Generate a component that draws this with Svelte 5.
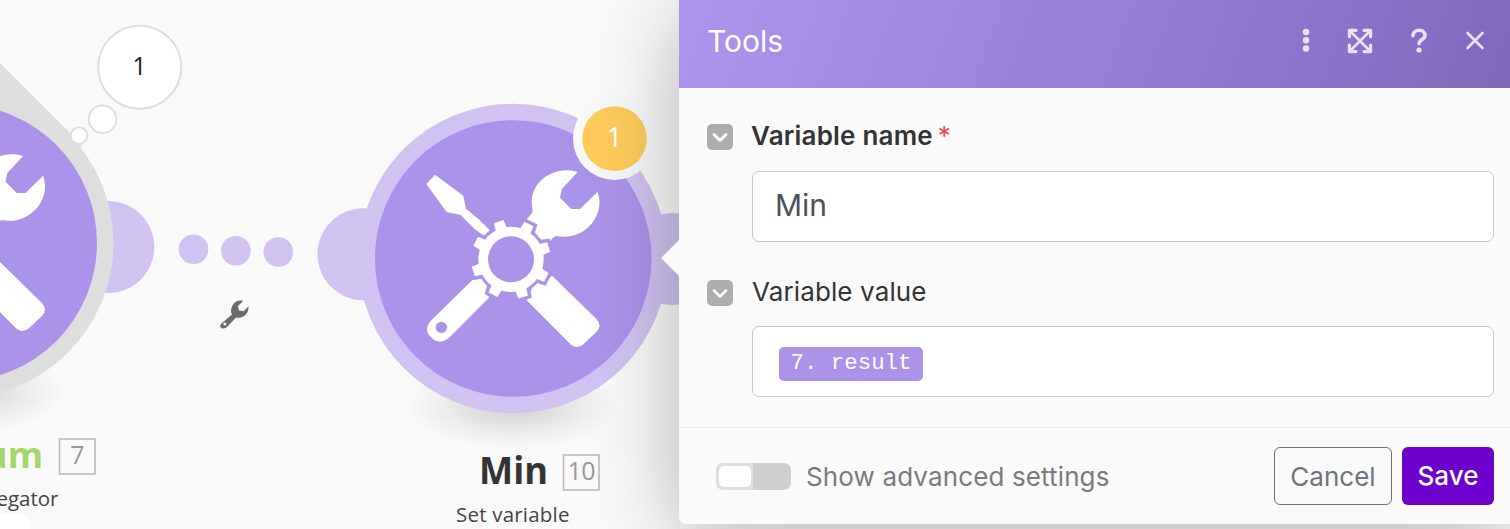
<script>
  const teeth = [27, 72, 117, 162, 207, 252, 297, 342];
  const links = [
    { x: 193.5, y: 249.3 },
    { x: 235.8, y: 250.8 },
    { x: 278.3, y: 252 }
  ];
</script>

{#snippet toolsIcon()}
  <path fill="#fff" d="M75 59L160 122L168 161L206 193L240 226L222 242L209 233Q190 220 181 209L152 180L110 171L49 87Z" />
  <path fill="#fff" d="M503 51C434 28 356 82 366 152L368 172L350 193L372 250L420 259L428 249L438 243C520 260 589 184 563 110L510 162H484L450 128L455 103Z" />
  <path fill="#fff" d="M427 363L560 493Q577 512 560 530L520 568Q502 583 484 570L350 436L370 390Z" />
  <path fill="#fff" fill-rule="evenodd" d="M188 374L230 370L237 428L122 544C100 567 74 562 62 545C46 532 49 509 65 495ZM94 500a17 17 0 1 0 .1 0Z" />
  <g class="gear-gap">
    <circle cx="303" cy="313" r="97" />
    {#each teeth as a}
      <path transform={`translate(303 313) rotate(${a})`} d="M86 -20L119 -15V15L86 20Z" />
    {/each}
  </g>
  <g fill="#fff">
    <circle cx="303" cy="313" r="98" />
    {#each teeth as a}
      <path transform={`translate(303 313) rotate(${a})`} d="M86 -18L119 -15V15L86 18Z" />
    {/each}
  </g>
  <circle cx="303" cy="313" r="69" fill="#ab93e9" />
{/snippet}

{#snippet toggle()}
  <span class="check">
    <svg width="26" height="26" viewBox="0 0 26 26"><path d="M7 10.5l6 6 6-6" fill="none" stroke="#fff" stroke-width="2.8" stroke-linecap="round" stroke-linejoin="round" /></svg>
  </span>
{/snippet}

<main>
  <svg class="canvas" width="1510" height="529" viewBox="0 0 1510 529">
    <defs>
      <radialGradient id="soft"><stop offset="0" stop-color="#000" stop-opacity=".16" /><stop offset=".6" stop-color="#000" stop-opacity=".06" /><stop offset="1" stop-color="#000" stop-opacity="0" /></radialGradient>
    </defs>
    <ellipse cx="-41" cy="392" rx="108" ry="42" fill="url(#soft)" />
    <ellipse cx="513" cy="407" rx="108" ry="42" fill="url(#soft)" />

    <circle cx="108.3" cy="247" r="46" fill="#d0c3f1" />
    <path d="M-60 3L68.5 131.5L82 146L20 220H-60Z" fill="#dedede" />
    <circle cx="-41.5" cy="243" r="155" fill="#dedede" />
    <circle cx="-41.5" cy="243" r="138.5" fill="#ab93e9" />
    <g transform="translate(-144.5 139) scale(.33333)">{@render toolsIcon()}</g>

    <g fill="#fff" stroke="#dedede" stroke-width="2">
      <circle cx="139.7" cy="67.2" r="41.5" />
      <circle cx="102.6" cy="119.3" r="13.8" />
      <circle cx="79" cy="135.6" r="8.3" />
    </g>
    <text class="seg" x="139.5" y="75" font-size="25" text-anchor="middle" fill="#222">1</text>

    {#each links as dot}
      <circle cx={dot.x} cy={dot.y} r="14.8" fill="#d0c3f1" />
    {/each}
    <path fill="#6b6b6b" fill-rule="evenodd" d="M243 301C237 299 231 304 231 312L232 314.5L221.5 323.5C219.5 325.5 220 327.5 222 328.3C224 329 226 328 227.5 326.5L236 317.5C244 319 249 313 248.5 306.5L243.5 311.3L239 310.5L238 306ZM224.8 322.4a1.5 1.5 0 1 0 .1 0Z" />

    <g fill="#d0c3f1">
      <circle cx="363.5" cy="254.3" r="46" />
      <circle cx="672" cy="259" r="46" />
      <circle cx="513" cy="258.5" r="154.7" />
    </g>
    <circle cx="513.2" cy="258.5" r="138.3" fill="#ab93e9" />
    <g transform="translate(410 155) scale(.33333)">{@render toolsIcon()}</g>
    <circle cx="614.5" cy="138.5" r="41.5" fill="#f8f8f8" />
    <circle cx="614.5" cy="138.7" r="32.3" fill="#fdcc5b" />
    <text class="seg" x="614.5" y="147" font-size="28" text-anchor="middle" fill="#fff">1</text>

    <text class="seg bold" x="43" y="468" font-size="36" text-anchor="end" fill="#a4d768">Sum</text>
    <rect x="59.5" y="439" width="35.5" height="35" fill="#f9f9f9" stroke="#bbb" stroke-width="1.6" />
    <text class="seg" x="77.5" y="464" font-size="25" text-anchor="middle" fill="#999">7</text>
    <text class="seg" x="58.5" y="506" font-size="20.5" text-anchor="end" fill="#444">Text aggregator</text>
    <rect x="-40" y="514" width="70" height="40" rx="14" fill="#fff" />

    <text class="seg bold" x="479" y="484" font-size="37" textLength="69" lengthAdjust="spacingAndGlyphs" fill="#333">Min</text>
    <rect x="563.5" y="455" width="35.5" height="35" fill="#f9f9f9" stroke="#bbb" stroke-width="1.6" />
    <text class="seg" x="581.5" y="480" font-size="25" textLength="28" text-anchor="middle" fill="#999">10</text>
    <text class="seg" x="456" y="521.5" font-size="20.5" textLength="113.5" fill="#444">Set variable</text>
  </svg>

  <section class="panel">
    <svg class="arrow" width="19" height="36" viewBox="0 0 19 36"><path d="M19 0L1 18L19 36Z" fill="#fafafa" /></svg>
    <header>
      <h1>Tools</h1>
      <nav>
        <svg width="10" height="26" viewBox="0 0 10 26"><g fill="#e9dff8"><circle cx="5" cy="4" r="3.3" /><circle cx="5" cy="12.2" r="3.3" /><circle cx="5" cy="20.5" r="3.3" /></g></svg>
        <svg width="26" height="26" viewBox="0 0 26 26"><path d="M3 3L23 23M23 3L3 23" stroke="#e9dff8" stroke-width="2.7" /><path d="M2.4 8.8V2.4H9M17 2.4H23.6V8.8M23.6 17V23.6H17M9 23.6H2.4V17" fill="none" stroke="#e9dff8" stroke-width="3.2" stroke-linecap="round" stroke-linejoin="round" /></svg>
        <svg width="20" height="26" viewBox="0 0 20 26"><path d="M4 7.8C4 4.3 6.5 2.3 10 2.3S16 4.3 16 7.5C16 11.5 10 11.5 10 15.8" fill="none" stroke="#e9dff8" stroke-width="3.5" stroke-linecap="round" /><circle cx="10" cy="22" r="2.6" fill="#e9dff8" /></svg>
        <svg width="20" height="26" viewBox="0 0 20 26"><path d="M2.5 5L17.5 20M17.5 5L2.5 20" stroke="#e9dff8" stroke-width="2.6" stroke-linecap="round" /></svg>
      </nav>
    </header>
    <div class="fields">
      <div class="field">
        {@render toggle()}
        <div class="label strong"><span>Variable name</span><span class="req">*</span></div>
        <div class="input">Min</div>
      </div>
      <div class="field">
        {@render toggle()}
        <div class="label value">Variable value</div>
        <div class="input pillbox"><span class="pill">7. result</span></div>
      </div>
    </div>
    <footer>
      <span class="switch"><i></i></span>
      <span class="adv">Show advanced settings</span>
      <button class="cancel">Cancel</button>
      <button class="save">Save</button>
    </footer>
  </section>
</main>

<style>
  :global(body) { background: #f9f9f9; overflow: hidden; }
  main { position: relative; width: 1510px; height: 529px; overflow: hidden; display: flex; justify-content: flex-end; font-family: Inter, sans-serif; }
  .canvas { position: absolute; inset: 0; }
  .seg { font-family: "Open Sans", sans-serif; }
  .bold { font-weight: 700; }
  .gear-gap { fill: #ab93e9; stroke: #ab93e9; stroke-width: 20; }
  .panel { position: relative; box-sizing: border-box; width: 831px; height: 524px; background: #fafafa; border-radius: 0 0 0 7px; box-shadow: 0 14px 90px rgba(0, 0, 0, .28); display: flex; flex-direction: column; }
  .arrow { position: absolute; left: -19px; top: 240px; }
  header { height: 88px; box-sizing: border-box; padding: 0 25px 6px 28px; display: flex; align-items: center; justify-content: space-between; background: linear-gradient(110deg, #ad94ec 0%, #9b82d9 45%, #8168bd 100%); }
  h1 { margin: 0; font-weight: 400; font-size: 30px; line-height: 40px; color: #fff; }
  nav { display: flex; align-items: center; gap: 36px; }
  .fields { height: 340px; box-sizing: border-box; padding: 31px 16px 0 28px; border-bottom: 1px solid #ececec; display: flex; flex-direction: column; gap: 33px; }
  .field { display: grid; grid-template-columns: 26px 742px; column-gap: 19px; grid-template-rows: 34px 71px; row-gap: 18px; }
  .field + .field { row-gap: 17px; }
  .check { align-self: center; width: 26px; height: 26px; margin-top: 2px; background: #adadad; border-radius: 5px; }
  .check svg { display: block; }
  .label { font-size: 26px; line-height: 34px; color: #333; white-space: nowrap; display: flex; }
  .strong { font-weight: 600; letter-spacing: .2px; margin-left: -1px; }
  .value { letter-spacing: .12px; }
  .req { color: #f5484e; font-weight: 400; margin-left: 5px; }
  .input { grid-column: 2; box-sizing: border-box; height: 71px; border: 1px solid #c8c8c8; border-radius: 7px; background: #fff; padding: 0 22px; font-size: 30px; line-height: 67px; color: #4b5259; }
  .pillbox { padding: 20px 26px; }
  .pill { display: block; width: 144px; height: 34px; box-sizing: border-box; border-radius: 5px; background: #ab93e9; color: #fff; font: 22.4px/32px "Liberation Mono", monospace; text-align: center; white-space: nowrap; }
  footer { flex: 1; display: flex; align-items: center; padding: 0 16px 0 37px; }
  .switch { width: 75px; height: 27px; box-sizing: border-box; padding: 3px; border-radius: 7px; background: linear-gradient(90deg, #dedede 50%, #cfcfcf 50%); }
  .switch i { display: block; width: 32px; height: 21px; border-radius: 5px; background: #fff; }
  .adv { margin-left: 15px; font-size: 26px; letter-spacing: .13px; color: #7b7b7b; flex: 1; white-space: nowrap; }
  button { box-sizing: border-box; height: 58px; border-radius: 6px; font: 400 26px/58px Inter, sans-serif; padding: 0; }
  .cancel { width: 118px; border: 1px solid #6c757d; background: transparent; color: #6c757d; margin-right: 10px; }
  .save { width: 92px; border: 0; background: #6d00cc; color: #fff; font-weight: 500; }
</style>
